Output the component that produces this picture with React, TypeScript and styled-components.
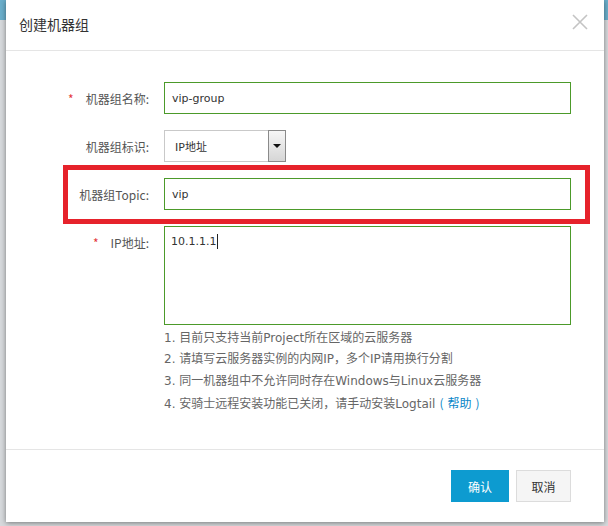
import React from "react";
import styled, { createGlobalStyle } from "styled-components";

const Global = createGlobalStyle`
  html, body { margin: 0; padding: 0; }
  body {
    width: 608px;
    height: 526px;
    overflow: hidden;
    background: #d9dcdf;
    font-family: "DejaVu Sans", "Noto Sans CJK SC", sans-serif;
  }
`;

const Page = styled.div`
  position: relative;
  width: 608px;
  height: 526px;
  background: linear-gradient(to bottom, #6aaecb 0, #6aaecb 20px, #d6d9dc 20px, #d6d9dc 100%);
`;

const Modal = styled.div`
  position: absolute;
  left: 6px;
  top: 0;
  width: 598px;
  height: 522px;
  background: #fff;
  box-shadow: 0 1px 5px rgba(0, 0, 0, 0.45);
  display: flex;
  flex-direction: column;
`;

const Header = styled.div`
  height: 51px;
  border-bottom: 1px solid #e5e5e5;
  display: flex;
  align-items: center;
  justify-content: space-between;
  padding: 3px 16px 6px 13px;
  box-sizing: border-box;
`;

const Title = styled.div`
  font-family: "Noto Sans CJK SC", sans-serif;
  font-size: 14px;
  color: #333;
`;

const Close = styled.div`
  width: 16px;
  height: 16px;
  margin-bottom: 3px;
  display: flex;
`;

const Body = styled.div`
  flex: 1;
  padding: 31px 33px 0 0;
  display: flex;
  flex-direction: column;
  gap: 16px;
`;

const Row = styled.div`
  display: grid;
  grid-template-columns: 143px 1fr;
  column-gap: 15px;
  align-items: start;
  position: relative;
`;

const Label = styled.div`
  height: 32px;
  display: flex;
  align-items: center;
  justify-content: flex-end;
  font-family: "Noto Sans CJK SC", sans-serif;
  font-size: 12px;
  color: #555;
  white-space: nowrap;
`;

const Star = styled.span`
  color: #e4393c;
  margin-right: 12px;
  font-size: 12px;
`;

const Input = styled.div`
  height: 32px;
  box-sizing: border-box;
  border: 1px solid #4c9a2a;
  padding: 0 7px;
  display: flex;
  align-items: center;
  font-size: 11px;
  color: #333;
`;

const TextArea = styled.div`
  height: 99px;
  box-sizing: border-box;
  border: 1px solid #4c9a2a;
  padding: 8px 6px;
  font-size: 11px;
  color: #333;
  display: flex;
  align-items: flex-start;
`;

const Caret = styled.span`
  display: inline-block;
  width: 1px;
  height: 15px;
  background: #222;
  margin-left: 1px;
  margin-top: -1px;
`;

const Select = styled.div`
  width: 122px;
  height: 32px;
  box-sizing: border-box;
  border: 1px solid #c9c9c9;
  display: flex;
  align-items: stretch;
`;

const SelectText = styled.div`
  flex: 1;
  display: flex;
  align-items: center;
  padding-left: 10px;
  font-size: 11px;
  color: #333;
`;

const SelectArrow = styled.div`
  width: 18px;
  box-sizing: border-box;
  border: 1px solid #8a8a8a;
  background: linear-gradient(to bottom, #f6f6f6, #d6d6d6);
  display: flex;
  align-items: center;
  justify-content: center;
  margin: -1px -1px -1px 0;
`;

const Triangle = styled.div`
  width: 0;
  height: 0;
  border-left: 4px solid transparent;
  border-right: 4px solid transparent;
  border-top: 4px solid #111;
`;

const Highlight = styled.div`
  position: absolute;
  left: 57px;
  top: -13px;
  right: -19px;
  bottom: -14px;
  border: 5px solid #e6222b;
  pointer-events: none;
`;

const Tips = styled.ol`
  margin: -13px 0 0 158px;
  padding: 0;
  list-style: none;
  font-size: 12px;
  line-height: 21.3px;
  color: #666;
`;

const Tip = styled.li`
  white-space: nowrap;
`;

const Link = styled.span`
  color: #0a86c8;
  font-family: "Noto Sans CJK SC", sans-serif;
`;

const Paren = styled.span`
  display: inline-block;
  width: 12px;
  text-align: center;
`;

const Footer = styled.div`
  border-top: 1px solid #e5e5e5;
  padding: 20px 33px 20px 0;
  display: flex;
  justify-content: flex-end;
  gap: 7px;
`;

const Button = styled.button<{ $primary?: boolean }>`
  height: 32px;
  width: ${(p) => (p.$primary ? "58px" : "55px")};
  box-sizing: border-box;
  border: 1px solid ${(p) => (p.$primary ? "#0d9bd0" : "#dcdcdc")};
  background: ${(p) => (p.$primary ? "#0d9bd0" : "#f5f5f5")};
  color: ${(p) => (p.$primary ? "#fff" : "#333")};
  font-family: "Noto Sans CJK SC", sans-serif;
  font-size: 12px;
  padding: 0;
  cursor: pointer;
`;

export default function App() {
  return (
    <>
      <Global />
      <Page>
        <Modal>
          <Header>
            <Title>创建机器组</Title>
            <Close>
              <svg width="16" height="16" viewBox="0 0 16 16">
                <path d="M1 1 L15 15 M15 1 L1 15" stroke="#c4c4c4" strokeWidth="1.6" fill="none" />
              </svg>
            </Close>
          </Header>
          <Body>
            <Row>
              <Label>
                <Star>*</Star>机器组名称:
              </Label>
              <Input>vip-group</Input>
            </Row>
            <Row>
              <Label>机器组标识:</Label>
              <Select>
                <SelectText>IP地址</SelectText>
                <SelectArrow>
                  <Triangle />
                </SelectArrow>
              </Select>
            </Row>
            <Row>
              <Label>机器组Topic:</Label>
              <Input>vip</Input>
              <Highlight />
            </Row>
            <Row>
              <Label>
                <Star>*</Star>IP地址:
              </Label>
              <TextArea>
                10.1.1.1<Caret />
              </TextArea>
            </Row>
            <Tips>
              <Tip>1. 目前只支持当前Project所在区域的云服务器</Tip>
              <Tip>2. 请填写云服务器实例的内网IP，多个IP请用换行分割</Tip>
              <Tip>3. 同一机器组中不允许同时存在Windows与Linux云服务器</Tip>
              <Tip>
                4. 安骑士远程安装功能已关闭，请手动安装Logtail
                <Link>
                  <Paren>(</Paren>帮助<Paren>)</Paren>
                </Link>
              </Tip>
            </Tips>
          </Body>
          <Footer>
            <Button $primary>确认</Button>
            <Button>取消</Button>
          </Footer>
        </Modal>
      </Page>
    </>
  );
}
